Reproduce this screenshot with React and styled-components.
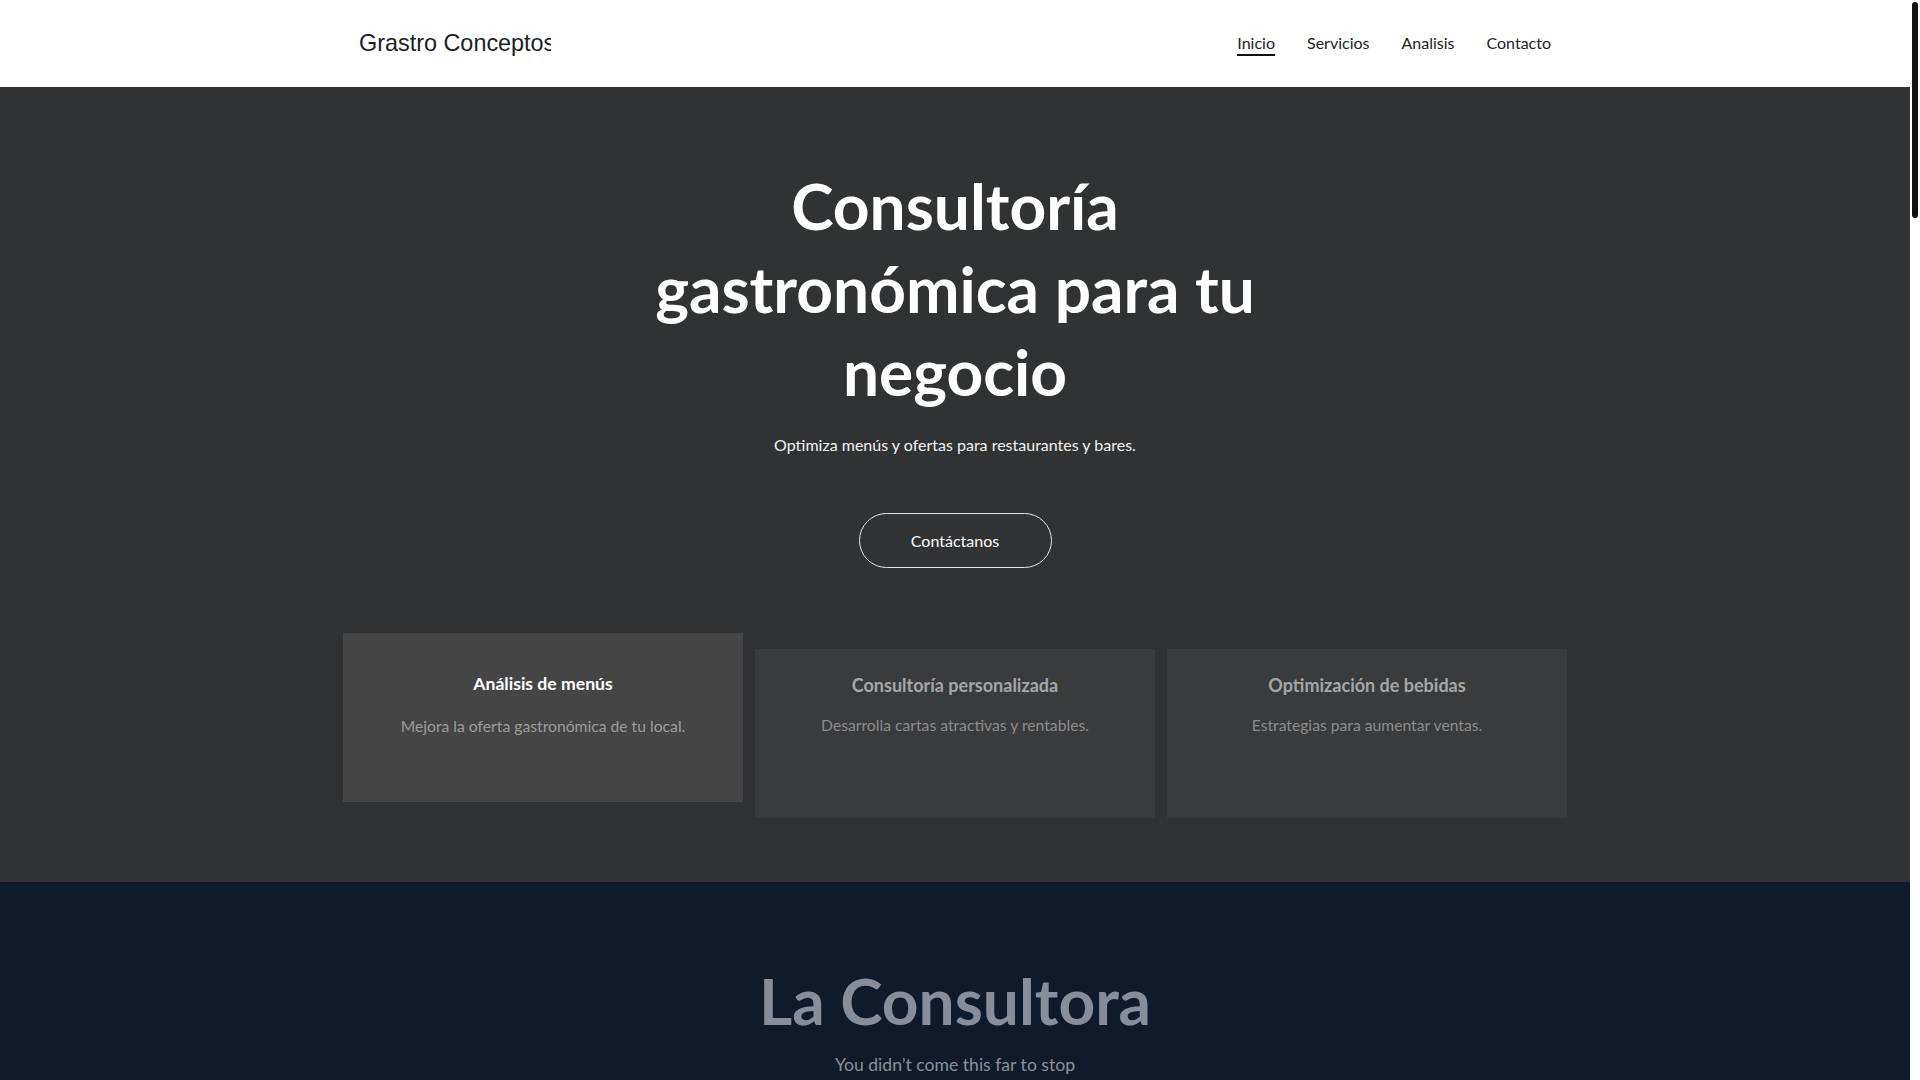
import styled, { createGlobalStyle } from "styled-components";

const GlobalStyle = createGlobalStyle`
  html, body {
    margin: 0;
    padding: 0;
    background: #ffffff;
    font-family: Lato, "Noto Sans", sans-serif;
  }
  body {
    margin-right: 10px;
  }
  * {
    box-sizing: border-box;
  }
`;

const services = [
  {
    title: "Análisis de menús",
    text: "Mejora la oferta gastronómica de tu local.",
    dim: false,
  },
  {
    title: "Consultoría personalizada",
    text: "Desarrolla cartas atractivas y rentables.",
    dim: true,
  },
  {
    title: "Optimización de bebidas",
    text: "Estrategias para aumentar ventas.",
    dim: true,
  },
];

const links = ["Inicio", "Servicios", "Analisis", "Contacto"];

const App = () => {
  return (
    <>
      <GlobalStyle />
      <Header>
        <HeaderInner>
          <Logo>Grastro Conceptos</Logo>
          <Nav>
            {links.map((link, i) => (
              <NavLink key={link} href="#" $active={i === 0}>
                {link}
              </NavLink>
            ))}
          </Nav>
        </HeaderInner>
      </Header>

      <Hero>
        <Title>Consultoría gastronómica para tu negocio</Title>
        <Subtitle>Optimiza menús y ofertas para restaurantes y bares.</Subtitle>
        <Button>Contáctanos</Button>
        <Cards>
          {services.map((s) => (
            <Card key={s.title} $dim={s.dim}>
              <CardTitle $dim={s.dim}>{s.title}</CardTitle>
              <CardText $dim={s.dim}>{s.text}</CardText>
            </Card>
          ))}
        </Cards>
      </Hero>

      <About>
        <AboutTitle>La Consultora</AboutTitle>
        <AboutSub>You didn’t come this far to stop</AboutSub>
        <AboutBody>
          Ayudamos a restaurantes y bares a crecer con menús pensados para
          vender más y mejor.
        </AboutBody>
      </About>

      <Filler $bg="#ffffff">
        <FillerTitle>Servicios</FillerTitle>
      </Filler>
      <Filler $bg="#f4f4f4">
        <FillerTitle>Analisis</FillerTitle>
      </Filler>
      <Filler $bg="#313234">
        <FillerTitle $light>Contacto</FillerTitle>
      </Filler>

      {/* page scrollbar, the browser one is hidden in the screenshot */}
      <ScrollTrack>
        <ScrollThumb />
      </ScrollTrack>
    </>
  );
};

const Header = styled.header`
  height: 87px;
  background: #ffffff;
  display: flex;
  justify-content: center;
`;

const HeaderInner = styled.div`
  width: 1224px;
  padding: 0 16px;
  display: flex;
  align-items: center;
  justify-content: space-between;
`;

const Logo = styled.div`
  width: 192px;
  overflow: hidden;
  white-space: nowrap;
  font-family: "Liberation Sans", Arial, sans-serif;
  font-size: 23.4px;
  color: #1b1e22;
`;

const Nav = styled.nav`
  display: flex;
  gap: 32px;
`;

const NavLink = styled.a`
  font-size: 16px;
  color: #222222;
  text-decoration: none;
  padding-bottom: 2px;
  border-bottom: 2px solid ${(p) => (p.$active ? "#111111" : "transparent")};
  margin-top: 2px;
`;

const Hero = styled.section`
  background: #313234;
  padding: 77px 0 80px;
  display: flex;
  flex-direction: column;
  align-items: center;
  color: #ffffff;
`;

const Title = styled.h1`
  margin: 0 0 19px;
  max-width: 640px;
  font-size: 64px;
  line-height: 1.3;
  font-weight: 700;
  text-align: center;
`;

const Subtitle = styled.p`
  margin: 0 0 56px;
  font-size: 16px;
  line-height: 1.5;
  color: #f2f2f2;
`;

const Button = styled.button`
  width: 193px;
  height: 55px;
  border: 1px solid #e6e6e6;
  border-radius: 28px;
  background: transparent;
  color: #ffffff;
  font-family: Lato, sans-serif;
  font-size: 16px;
  cursor: pointer;
`;

const Cards = styled.div`
  margin-top: 65px;
  width: 1224px;
  display: grid;
  grid-template-columns: repeat(3, 1fr);
  gap: 12px;
  align-items: start;
`;

const Card = styled.div`
  height: 169px;
  padding: ${(p) => (p.$dim ? "23px" : "38px")} 24px 0;
  text-align: center;
  background: ${(p) => (p.$dim ? "#3a3b3d" : "#454545")};
  transform: translateY(${(p) => (p.$dim ? "16px" : "0")});
`;

const CardTitle = styled.h3`
  margin: 0 0 ${(p) => (p.$dim ? "15px" : "18px")};
  font-size: ${(p) => (p.$dim ? "18px" : "17.6px")};
  line-height: 1.5;
  font-weight: 700;
  color: ${(p) => (p.$dim ? "#a6a6a6" : "#ffffff")};
`;

const CardText = styled.p`
  margin: 0;
  font-size: 15.7px;
  line-height: 1.5;
  color: ${(p) => (p.$dim ? "#8c8c8c" : "#9c9c9c")};
`;

const About = styled.section`
  background: #0f1b2b;
  padding: 77px 0 120px;
  min-height: 1200px;
  display: flex;
  flex-direction: column;
  align-items: center;
`;

const AboutTitle = styled.h2`
  margin: 0 0 10px;
  font-size: 64px;
  line-height: 1.3;
  font-weight: 700;
  color: #878e99;
`;

const AboutSub = styled.p`
  margin: 0 0 40px;
  font-size: 17.6px;
  line-height: 1.5;
  color: #8a909a;
`;

const AboutBody = styled.p`
  margin: 0;
  max-width: 640px;
  font-size: 18px;
  line-height: 1.6;
  text-align: center;
  color: #8a909a;
`;

const Filler = styled.section`
  min-height: 1100px;
  background: ${(p) => p.$bg};
  padding: 80px 0;
  display: flex;
  justify-content: center;
`;

const FillerTitle = styled.h2`
  margin: 0;
  font-size: 48px;
  font-weight: 700;
  color: ${(p) => (p.$light ? "#ffffff" : "#222222")};
`;

const ScrollTrack = styled.div`
  position: fixed;
  top: 0;
  right: 0;
  width: 10px;
  height: 100vh;
  background: #ffffff;
`;

const ScrollThumb = styled.div`
  position: absolute;
  top: 2px;
  right: 2px;
  width: 6px;
  height: 216px;
  border-radius: 3px;
  background: #111111;
`;

export default App;
